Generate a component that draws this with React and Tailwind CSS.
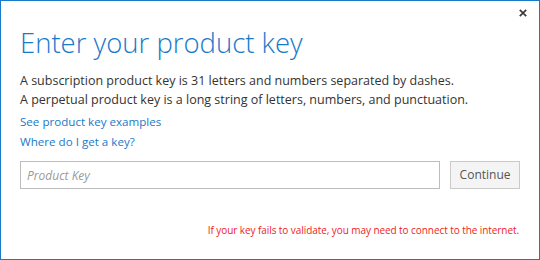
export default function App() {
  return (
    <div className="relative flex h-[260px] w-[540px] flex-col border border-[#1979ca] bg-white font-['Open_Sans','Noto_Sans',sans-serif]">
      {/* close button */}
      <button className="absolute right-[12px] top-[8px] h-[8px] w-[8px]">
        <svg viewBox="0 0 8 8" className="h-[8px] w-[8px]">
          <path d="M0.8 0.8L7.2 7.2M7.2 0.8L0.8 7.2" stroke="#3c3c3c" strokeWidth="1.7" />
        </svg>
      </button>

      <div className="flex flex-col px-[19px] pt-[24px]">
        <h1 className="text-[27.5px] font-light leading-[36px] text-[#1979ca]">
          Enter your product key
        </h1>

        <div className="mt-[10px] text-[12.5px] leading-[19px] text-[#333]">
          <p>A subscription product key is 31 letters and numbers separated by dashes.</p>
          <p>A perpetual product key is a long string of letters, numbers, and punctuation.</p>
        </div>

        <a className="mt-[3px] text-[11.6px] leading-[20px] text-[#1979ca]">See product key examples</a>
        <a className="text-[11.6px] leading-[20px] text-[#1979ca]">Where do I get a key?</a>

        <div className="mt-[9px] flex gap-[10px]">
          <input
            placeholder="Product Key"
            className="h-[28px] w-[421px] border border-[#bdbdbd] px-[6px] text-[12px] outline-none placeholder:italic placeholder:text-[#9a9a9a]"
          />
          <button className="h-[28px] w-[70px] border border-[#cacaca] bg-[#f4f4f4] text-[12px] text-[#555]">
            Continue
          </button>
        </div>

        <p className="mr-[1px] mt-[34px] text-right text-[10px] leading-[14px] tracking-[-0.07px] text-[#ee1c25]">
          If your key fails to validate, you may need to connect to the internet.
        </p>
      </div>
    </div>
  );
}
